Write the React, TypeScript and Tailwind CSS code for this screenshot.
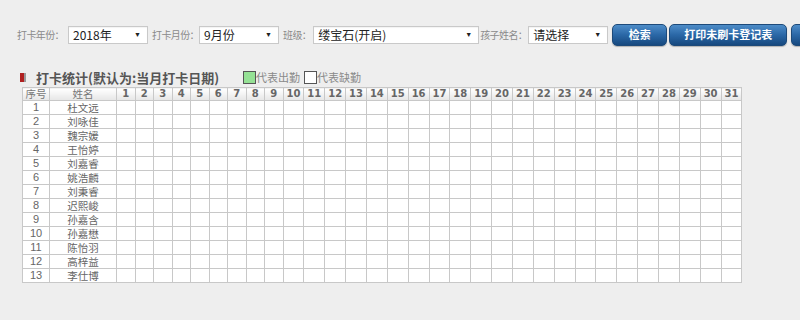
import React from "react";

const names = ["杜文远","刘咏佳","魏宗媛","王怡婷","刘嘉睿","姚浩麟","刘秉睿","迟熙峻","孙嘉含","孙嘉懋","陈怡羽","高梓益","李仕博"];
const days = Array.from({ length: 31 }, (_, i) => i + 1);

const cjk = { fontFamily: '"Microsoft YaHei","Noto Sans CJK SC","Liberation Sans",sans-serif' };
const sans = { fontFamily: '"Liberation Sans","Noto Sans CJK SC",sans-serif' };
const dv = { fontFamily: '"DejaVu Sans","Liberation Sans",sans-serif' };

function Select({ w, value }: { w: string; value: string }) {
  return (
    <div className={`${w} h-[18px] shrink-0 bg-white border border-[#c9c9c9] flex items-center justify-between pl-[4px] pr-[6px] shadow-[inset_0_1px_1px_rgba(0,0,0,0.05)]`}>
      <span className="text-[12px] text-[#222] leading-none" style={cjk}>{value}</span>
      <span className="text-[7px] text-[#222] leading-none">▼</span>
    </div>
  );
}

function Label({ children }: { children: React.ReactNode }) {
  return <span className="shrink-0 text-[10px] tracking-[-0.6px] text-[#8a8a8a] leading-none" style={cjk}>{children}</span>;
}

function Sp({ w }: { w: string }) {
  return <div className={`${w} shrink-0`} />;
}

function Btn({ w, children }: { w: string; children?: React.ReactNode }) {
  return (
    <div className={`${w} h-[22px] rounded-[5px] border border-[#1d4a7a] bg-gradient-to-b from-[#4d8cc8] via-[#2a67a6] to-[#17497f] flex items-center justify-center text-white text-[11px] font-bold shrink-0 shadow-[0_1px_1px_rgba(0,0,0,0.25)]`} style={cjk}>
      {children}
    </div>
  );
}

export default function App() {
  return (
    <div className="w-[800px] h-[320px] bg-[#eeeeee] overflow-hidden relative">
      <div className="flex items-center pl-[17px] pt-[23px] h-[46px] whitespace-nowrap">
        <Label>打卡年份：</Label>
        <Sp w="w-[4px]" />
        <Select w="w-[80px]" value="2018年" />
        <Sp w="w-[4px]" />
        <Label>打卡月份：</Label>
        <Select w="w-[80px]" value="9月份" />
        <Sp w="w-[4px]" />
        <Label>班级：</Label>
        <Sp w="w-[2px]" />
        <Select w="w-[166px]" value="缕宝石(开启)" />
        <Sp w="w-[1px]" />
        <Label>孩子姓名：</Label>
        <Sp w="w-[1px]" />
        <Select w="w-[80px]" value="请选择" />
        <Sp w="w-[4px]" />
        <Btn w="w-[55px]">检索</Btn>
        <Sp w="w-[2px]" />
        <Btn w="w-[118px]">打印未刷卡登记表</Btn>
        <Sp w="w-[4px]" />
        <Btn w="w-[40px]" />
      </div>

      <div className="flex items-center pl-[20px] mt-[23px] h-[17px]">
        <div className="w-[4px] h-[9px] bg-[#b02020]" />
        <div className="w-[2px] h-[9px] bg-[#9a9a9a] mr-[10px]" />
        <span className="text-[13px] font-bold text-[#555] leading-none" style={cjk}>打卡统计(默认为:当月打卡日期)</span>
        <div className="w-[24px]" />
        <div className="w-[13px] h-[13px] bg-[#95e195] border border-[#555]" />
        <span className="text-[11px] text-[#8a8a8a] leading-none" style={cjk}>代表出勤</span>
        <div className="w-[4px]" />
        <div className="w-[13px] h-[13px] bg-white border border-[#555]" />
        <span className="text-[11px] text-[#8a8a8a] leading-none" style={cjk}>代表缺勤</span>
      </div>

      <div className="pl-[22px] mt-[1px]">
        <table className="border-collapse table-fixed w-[720px] bg-white">
          <colgroup>
            <col style={{ width: 27 }} />
            <col style={{ width: 67 }} />
            {days.map((d) => (
              <col key={d} style={{ width: d <= 9 ? 18.5 : 20.86 }} />
            ))}
          </colgroup>
          <thead>
            <tr className="h-[13px]">
              <th className="border border-[#c8c8c8] bg-gradient-to-b from-white to-[#e6e6e6] text-[10.5px] font-normal text-[#777] leading-[12px] p-0" style={cjk}>序号</th>
              <th className="border border-[#c8c8c8] bg-gradient-to-b from-white to-[#e6e6e6] text-[10.5px] font-normal text-[#777] leading-[12px] p-0" style={cjk}>姓名</th>
              {days.map((d) => (
                <th key={d} className="border border-[#c8c8c8] bg-gradient-to-b from-white to-[#e6e6e6] text-[10px] font-bold text-[#666] leading-[12px] p-0" style={dv}>{d}</th>
              ))}
            </tr>
          </thead>
          <tbody>
            {names.map((n, i) => (
              <tr key={i} className="h-[14px]">
                <td className="border border-[#c8c8c8] text-center text-[11px] text-[#666] leading-[13px] p-0" style={sans}>{i + 1}</td>
                <td className="border border-[#c8c8c8] text-center text-[10.5px] text-[#666] leading-[13px] p-0" style={cjk}>{n}</td>
                {days.map((d) => (
                  <td key={d} className="border border-[#c8c8c8] p-0" />
                ))}
              </tr>
            ))}
          </tbody>
        </table>
      </div>
    </div>
  );
}
